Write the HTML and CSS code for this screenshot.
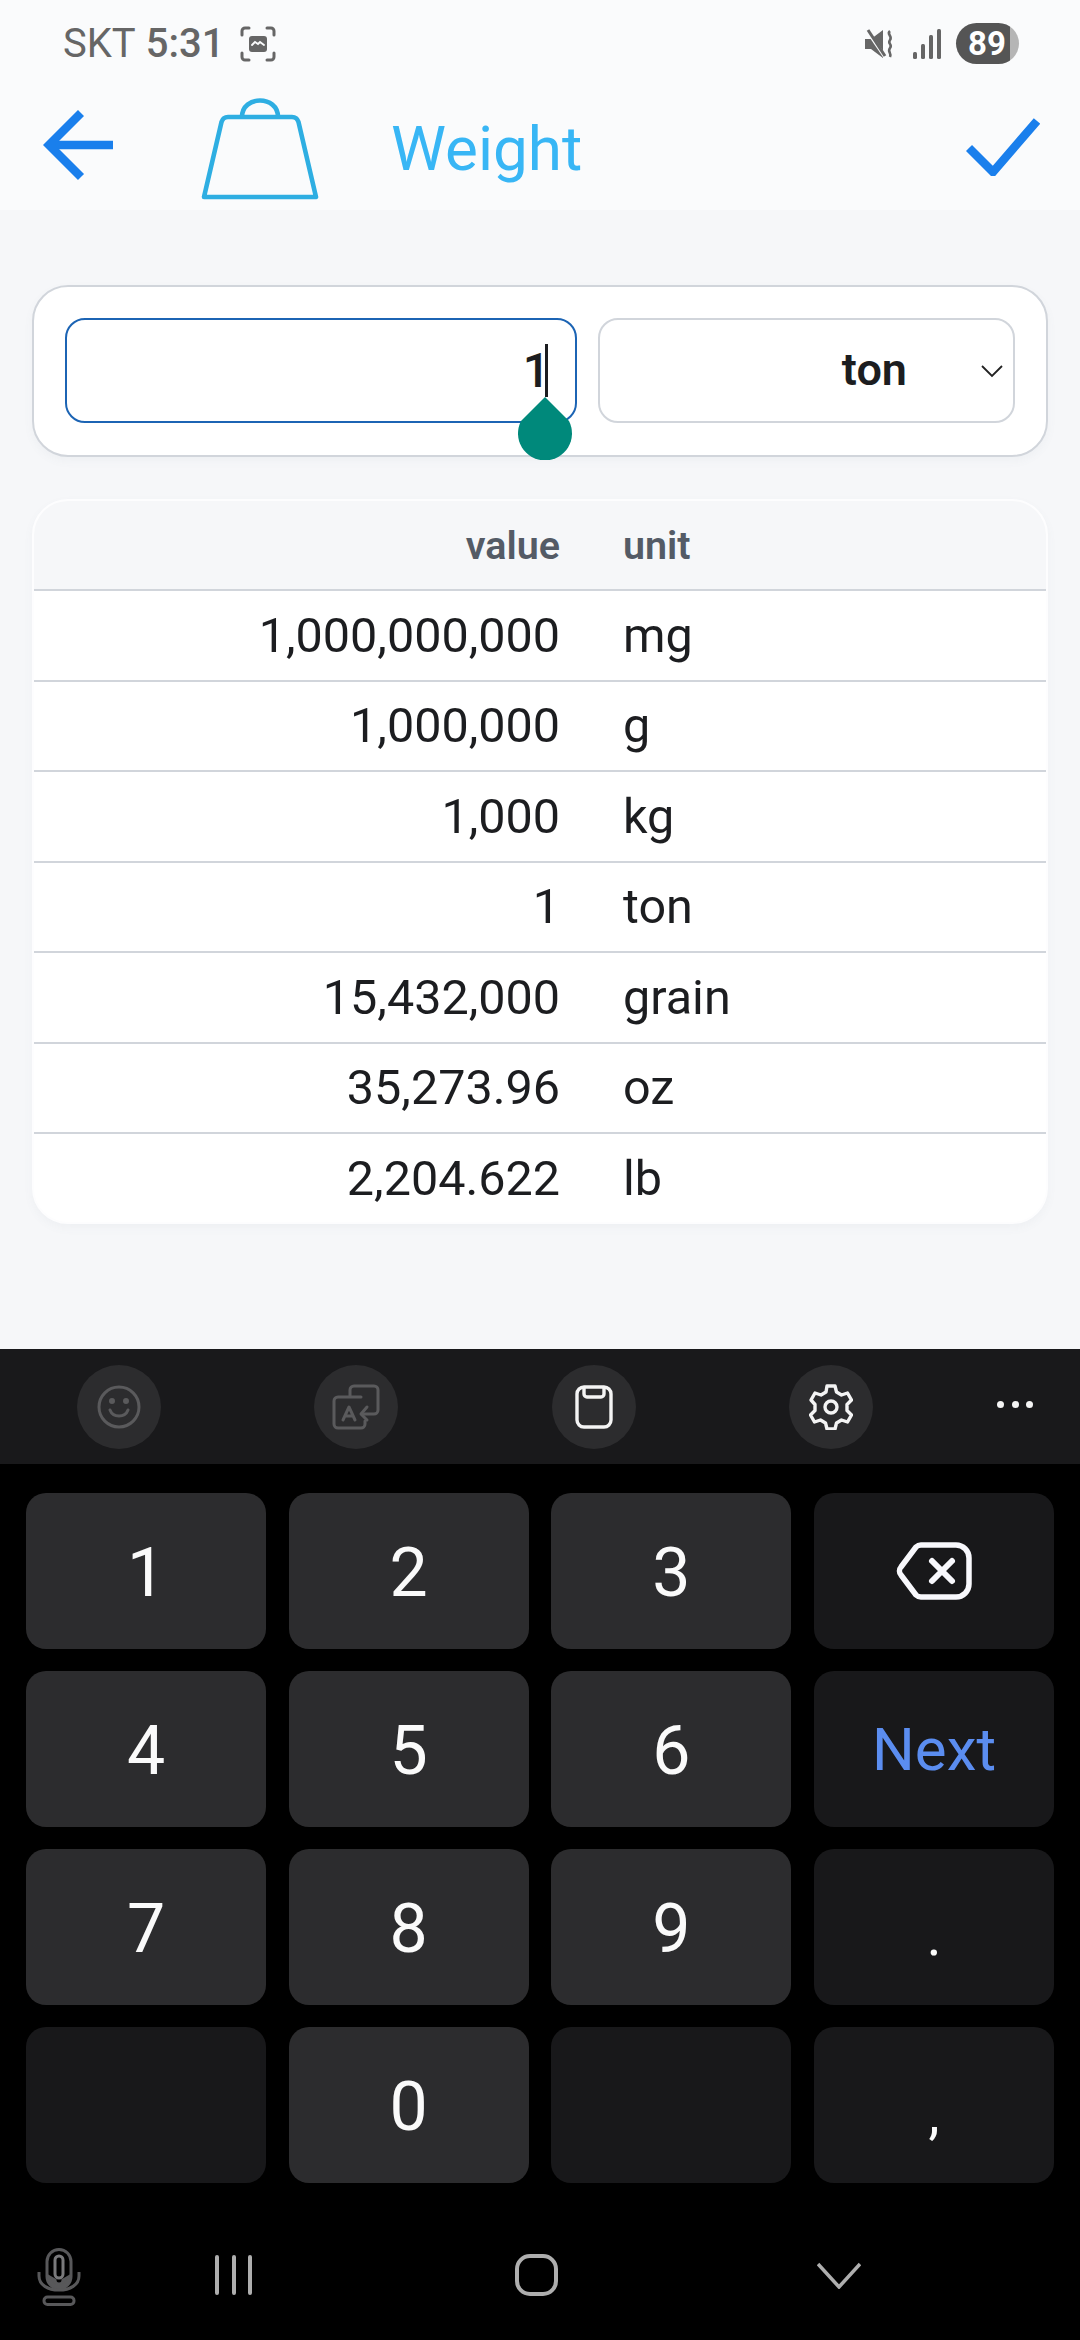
FILE: index.html
```html
<!DOCTYPE html>
<html lang="en">
<head>
    <meta charset="UTF-8">
    <meta name="viewport" content="width=device-width, initial-scale=1.0">
    <title>Weight</title>
    <link rel="stylesheet" href="styles.css">
</head>
<body>
    <div class="screen">
        <header class="top">
            <div class="status">
                <div class="status-left">
                    <span class="carrier">SKT</span>
                    <span class="clock">5:31</span>
                    <svg class="shot-icon" viewBox="0 0 36 36" width="36" height="36" fill="none" stroke="#666" stroke-width="3" stroke-linecap="round">
                        <path d="M2 9V5a3 3 0 0 1 3-3h4M27 2h4a3 3 0 0 1 3 3v4M34 27v4a3 3 0 0 1-3 3h-4M9 34H5a3 3 0 0 1-3-3v-4"/>
                        <rect x="9" y="10" width="18" height="16" rx="3" fill="#666" stroke="none"/>
                        <path d="M12 19l3-3 3 2 2-2 4 3" stroke="#fafbfc" stroke-width="1.800"/>
                    </svg>
                </div>
                <div class="status-right">
                    <svg viewBox="0 0 30 30" width="30" height="30" class="mute-icon">
                        <path d="M0 10h6l12-9v28L6 20H0z" fill="#666"/>
                        <path d="M1 0l19 28" stroke="#fafbfc" stroke-width="3.500"/>
                        <path d="M3 1l17 26" stroke="#666" stroke-width="3"/>
                        <path d="M25 2c-4 3 3 5 0 9s3 4 0 8 2 5 0 9" fill="none" stroke="#666" stroke-width="2.600"/>
                    </svg>
                    <svg viewBox="0 0 28 30" width="28" height="30" class="signal-icon" fill="#666">
                        <rect x="0" y="23" width="4" height="7" rx="1.500"/>
                        <rect x="8" y="15" width="4" height="15" rx="1.500"/>
                        <rect x="16" y="6" width="4" height="24" rx="1.500"/>
                        <rect x="24" y="0" width="4" height="30" rx="1.500"/>
                    </svg>
                    <div class="battery"><span class="battery-num">89</span></div>
                </div>
            </div>
            <div class="appbar">
                <svg class="back-icon" viewBox="0 0 70 70" width="70" height="70" fill="none" stroke="#1a7fec" stroke-width="8.500">
                    <path d="M70 35H6"/>
                    <path d="M38 3L6 35l32 32"/>
                </svg>
                <svg class="weight-icon" viewBox="0 0 118 102" width="118" height="102" fill="none" stroke="#2eaee2" stroke-width="4.600" stroke-linejoin="round">
                    <path d="M27 19h64q5 0 6.500 5L115 99H3L20.500 24q1.500-5 6.500-5z"/>
                    <path d="M41 19c0-22 36-22 36 0"/>
                </svg>
                <h1 class="title">Weight</h1>
                <svg class="check-icon" viewBox="0 0 74 58" width="74" height="58" fill="none" stroke="#1a7fec" stroke-width="8.500">
                    <path d="M3 30l24 24L71 3"/>
                </svg>
            </div>
        </header>

        <main class="content">
            <section class="card converter">
                <div class="field focused">
                    <span class="field-value">1</span>
                    <span class="caret"></span>
                    <span class="caret-handle"></span>
                </div>
                <div class="field select">
                    <span class="select-value">ton</span>
                    <svg class="select-arrow" viewBox="0 0 22 13" width="22" height="13" fill="none" stroke="#222" stroke-width="1.800">
                        <path d="M1 1l10 10L21 1"/>
                    </svg>
                </div>
            </section>

            <section class="card results">
                <div class="row head"><span class="val">value</span><span class="unit">unit</span></div>
                <div class="row"><span class="val">1,000,000,000</span><span class="unit">mg</span></div>
                <div class="row"><span class="val">1,000,000</span><span class="unit">g</span></div>
                <div class="row"><span class="val">1,000</span><span class="unit">kg</span></div>
                <div class="row"><span class="val">1</span><span class="unit">ton</span></div>
                <div class="row"><span class="val">15,432,000</span><span class="unit">grain</span></div>
                <div class="row"><span class="val">35,273.96</span><span class="unit">oz</span></div>
                <div class="row"><span class="val">2,204.622</span><span class="unit">lb</span></div>
            </section>
        </main>

        <section class="keyboard">
            <div class="toolbar">
                <div class="tool">
                    <svg viewBox="0 0 44 44" width="44" height="44" fill="none" stroke="#5a5a5c" stroke-width="3" stroke-linecap="round">
                        <circle cx="22" cy="22" r="20"/>
                        <path d="M13 25c3 8 15 8 18 0"/>
                        <circle cx="15" cy="16" r="1.500" fill="#5a5a5c"/>
                        <circle cx="29" cy="16" r="1.500" fill="#5a5a5c"/>
                    </svg>
                </div>
                <div class="tool">
                    <svg viewBox="0 0 48 46" width="48" height="46" fill="none" stroke="#5a5a5c" stroke-width="3" stroke-linecap="round" stroke-linejoin="round">
                        <path d="M18 12V6a4 4 0 0 1 4-4h20a4 4 0 0 1 4 4v20a4 4 0 0 1-4 4H30"/>
                        <path d="M29 13H6a4 4 0 0 0-4 4v23a4 4 0 0 0 4 4h23a4 4 0 0 0 4-4v-3"/>
                        <path d="M11 36l6-13 6 13M13 32h8M35 23l-6 7 6 6"/>
                    </svg>
                </div>
                <div class="tool">
                    <svg viewBox="0 0 38 44" width="38" height="44" fill="none" stroke="#f4f4f4" stroke-width="3.400" stroke-linejoin="round">
                        <rect x="2" y="2" width="34" height="40" rx="7"/>
                        <path d="M9 2v7a3 3 0 0 0 3 3h14a3 3 0 0 0 3-3V2"/>
                    </svg>
                </div>
                <div class="tool">
                    <svg viewBox="0 0 44 46" width="44" height="46" fill="none" stroke="#f4f4f4" stroke-width="3.400" stroke-linejoin="round">
                        <path d="M18 2h8l1.500 6 5 3 6-2 4 7-4.500 4.500v6l4.500 4.500-4 7-6-2-5 3-1.500 6h-8l-1.500-6-5-3-6 2-4-7 4.500-4.500v-6L2 16l4-7 6 2 5-3z"/>
                        <circle cx="22" cy="23" r="6"/>
                    </svg>
                </div>
                <div class="more"><i></i><i></i><i></i></div>
            </div>
            <div class="keys">
                <div class="key">1</div>
                <div class="key">2</div>
                <div class="key">3</div>
                <div class="key dark">
                    <svg viewBox="0 0 76 58" width="76" height="58" fill="none" stroke="#f8f8fc" stroke-width="5.500" stroke-linejoin="round" stroke-linecap="round">
                        <path d="M25 3h35a13 13 0 0 1 13 13v26a13 13 0 0 1-13 13H25a8 8 0 0 1-5-2L5 33a6 6 0 0 1 0-8L20 5a8 8 0 0 1 5-2z"/>
                        <path d="M36 19l20 20M56 19L36 39" stroke-width="6"/>
                    </svg>
                </div>
                <div class="key">4</div>
                <div class="key">5</div>
                <div class="key">6</div>
                <div class="key dark next">Next</div>
                <div class="key">7</div>
                <div class="key">8</div>
                <div class="key">9</div>
                <div class="key dark sign">.</div>
                <div class="key dark"></div>
                <div class="key">0</div>
                <div class="key dark"></div>
                <div class="key dark sign">,</div>
            </div>
            <div class="navbar">
                <svg class="mic" viewBox="0 0 44 58" width="44" height="58" fill="none" stroke="#58585a" stroke-width="3">
                    <rect x="10" y="1.500" width="24" height="39" rx="12"/>
                    <rect x="18" y="8" width="8" height="22" rx="4" stroke="#7a7a7c"/>
                    <path d="M2 24v4c0 9 9 14 20 14s20-5 20-14v-4"/>
                    <path d="M11 28c1 7 5 11 11 11s10-4 11-11l-7 4a4 4 0 0 1-8 0z" fill="#58585a"/>
                    <rect x="7" y="49" width="30" height="7.500" rx="3.500"/>
                </svg>
                <svg class="nav-recent" viewBox="0 0 37 40" width="37" height="40" stroke="#aeaeae" stroke-width="4" stroke-linecap="round">
                    <path d="M2 2v36M19 2v36M35 2v36"/>
                </svg>
                <svg class="nav-home" viewBox="0 0 43 42" width="43" height="42" fill="none" stroke="#aeaeae" stroke-width="4">
                    <rect x="2" y="2" width="39" height="38" rx="13"/>
                </svg>
                <svg class="nav-down" viewBox="0 0 44 27" width="44" height="27" fill="none" stroke="#aeaeae" stroke-width="3.500">
                    <path d="M1 2l21 23L43 2"/>
                </svg>
            </div>
        </section>
    </div>
</body>
</html>
```

FILE: styles.css
```css
* {
    box-sizing: border-box;
}

html, body {
    margin: 0;
    padding: 0;
}

body {
    font-family: Roboto, "Liberation Sans", sans-serif;
    background-color: #f6f7f9;
    color: #1c1d20;
}

.screen {
    width: 1080px;
    height: 2340px;
    display: flex;
    flex-direction: column;
    overflow: hidden;
}

/* status bar + app bar */
.top {
    height: 210px;
    background-color: #fafbfc;
}

.status {
    height: 84px;
    padding: 3px 61px 0 63px;
    display: flex;
    justify-content: space-between;
    align-items: center;
}

.status-left, .status-right {
    display: flex;
    align-items: center;
}

.carrier, .clock {
    font-size: 40px;
    color: #666;
}

.clock {
    font-weight: 500;
    margin-left: 10px;
}

.shot-icon {
    margin-left: 16px;
}

.signal-icon {
    margin-left: 18px;
    margin-right: 15px;
}

.battery {
    width: 63px;
    height: 41px;
    border-radius: 21px;
    background: linear-gradient(to right, #555 0, #555 85%, #b5b5b5 85%);
    display: flex;
    align-items: center;
    padding-left: 12px;
}

.battery-num {
    color: #fff;
    font-size: 33px;
    font-weight: 700;
    line-height: 41px;
}

.appbar {
    display: flex;
    align-items: center;
    height: 123px;
    padding-left: 43px;
}

.back-icon {
    flex: none;
    margin-top: -1px;
}

.weight-icon {
    flex: none;
    margin-left: 88px;
    margin-top: 6px;
}

.title {
    margin: 6px 0 0 72px;
    font-size: 62px;
    font-weight: 400;
    color: #38b6f5;
    flex: 1;
}

.check-icon {
    flex: none;
    margin-right: 40px;
    margin-top: 2px;
}

/* converter + table */
.content {
    flex: 1;
    padding: 75px 32px 0 32px;
}

.card {
    border-radius: 36px;
    background-color: #fff;
    box-shadow: 0 4px 10px rgba(100, 110, 130, 0.05);
}

.converter {
    height: 172px;
    border: 2px solid #d1d5db;
    padding: 31px;
    display: flex;
    gap: 21px;
}

.field {
    height: 105px;
    border: 2px solid #d1d5db;
    border-radius: 20px;
    position: relative;
    display: flex;
    align-items: center;
}

.focused {
    width: 512px;
    border-color: #1c64b4;
    justify-content: flex-end;
    padding-right: 25px;
}

.field-value {
    font-size: 48px;
    font-weight: 500;
}

.caret {
    position: absolute;
    left: 478px;
    top: 24px;
    width: 3px;
    height: 53px;
    background-color: #1c1d20;
}

.caret-handle {
    position: absolute;
    left: 451px;
    top: 77px;
    width: 54px;
    height: 63px;
    background-color: #00897b;
    clip-path: path("M27 0L51 24A27 27 0 1 1 3 24Z");
}

.select {
    flex: 1;
    justify-content: flex-end;
    padding-right: 106px;
    padding-bottom: 2px;
}

.select-value {
    font-size: 45px;
    font-weight: 600;
}

.select-arrow {
    position: absolute;
    right: 10px;
    top: 45px;
}

.results {
    margin-top: 42px;
    height: 725px;
    overflow: hidden;
    border: 2px solid #fdfdfe;
}

.row {
    height: 90.500px;
    display: flex;
    align-items: center;
    font-size: 48.500px;
    border-top: 2px solid #d1d5db;
}

.head {
    height: 88px;
    border-top: none;
    background-color: #f6f7f9;
    font-size: 39.500px;
    font-weight: 600;
    color: #545b66;
}

.val {
    width: 526px;
    text-align: right;
}

.unit {
    margin-left: 63px;
}

/* keyboard */
.keyboard {
    height: 991px;
    background-color: #000;
}

.toolbar {
    height: 115px;
    background-color: #19191b;
    position: relative;
    display: flex;
    align-items: center;
    padding-left: 77px;
    gap: 153.300px;
}

.tool {
    width: 84px;
    height: 84px;
    border-radius: 50%;
    background-color: #2c2c2e;
    display: flex;
    align-items: center;
    justify-content: center;
}

.more {
    position: absolute;
    left: 997px;
    top: 52px;
    display: flex;
    gap: 7.500px;
}

.more i {
    width: 7px;
    height: 7px;
    border-radius: 50%;
    background-color: #f4f4f4;
}

.keys {
    padding: 29px 26px 0 26px;
    display: grid;
    grid-template-columns: repeat(4, 240px);
    grid-auto-rows: 156px;
    column-gap: 22.700px;
    row-gap: 22px;
}

.key {
    border-radius: 20px;
    background-color: #2c2c2e;
    color: #fafafa;
    font-size: 68px;
    padding-top: 4px;
    display: flex;
    align-items: center;
    justify-content: center;
}

.dark {
    background-color: #18181a;
    padding-top: 0;
}

.next {
    color: #5b8df0;
    font-size: 60px;
}

.sign {
    font-size: 56px;
    padding-top: 18px;
}

.navbar {
    height: 135px;
    position: relative;
}

.navbar svg {
    position: absolute;
}

.mic {
    left: 37px;
    top: 65px;
}

.nav-recent {
    left: 215px;
    top: 72px;
}

.nav-home {
    left: 515px;
    top: 71px;
}

.nav-down {
    left: 817px;
    top: 79px;
}
```
